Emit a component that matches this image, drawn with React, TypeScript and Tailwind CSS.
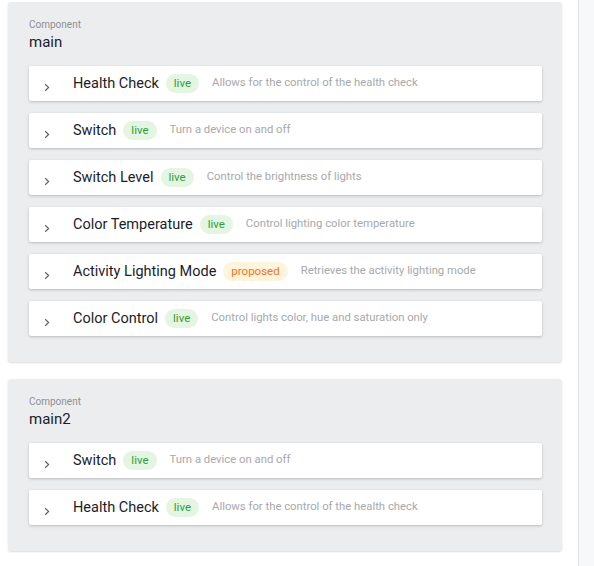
import React from "react";

type Capability = {
  name: string;
  status: "live" | "proposed";
  description: string;
};

const components: { id: string; capabilities: Capability[] }[] = [
  {
    id: "main",
    capabilities: [
      { name: "Health Check", status: "live", description: "Allows for the control of the health check" },
      { name: "Switch", status: "live", description: "Turn a device on and off" },
      { name: "Switch Level", status: "live", description: "Control the brightness of lights" },
      { name: "Color Temperature", status: "live", description: "Control lighting color temperature" },
      { name: "Activity Lighting Mode", status: "proposed", description: "Retrieves the activity lighting mode" },
      { name: "Color Control", status: "live", description: "Control lights color, hue and saturation only" },
    ],
  },
  {
    id: "main2",
    capabilities: [
      { name: "Switch", status: "live", description: "Turn a device on and off" },
      { name: "Health Check", status: "live", description: "Allows for the control of the health check" },
    ],
  },
];

function Chevron() {
  return (
    <svg width="6" height="9" viewBox="0 0 6 9" className="mt-[7px] shrink-0">
      <polyline points="1.2,1.2 4.6,4.5 1.2,7.8" fill="none" stroke="#5f6368" strokeWidth="1.2" />
    </svg>
  );
}

function Badge({ status }: { status: Capability["status"] }) {
  if (status === "proposed") {
    return (
      <span className="ml-[7px] inline-flex items-center h-[19px] px-[8px] rounded-full bg-[#fff4dc] text-[#f5711f] text-[11.5px]">
        proposed
      </span>
    );
  }
  return (
    <span className="ml-[7px] inline-flex items-center h-[19px] px-[8px] rounded-full bg-[#e4f5e2] text-[#2f9e38] text-[11.5px]">
      live
    </span>
  );
}

function CapabilityRow({ cap }: { cap: Capability }) {
  return (
    <div className="h-[35px] bg-white rounded-[2px] shadow-[0_1px_3px_rgba(0,0,0,0.22)] flex items-center pl-[15px]">
      <Chevron />
      <span className="ml-[23px] text-[14.5px] text-[#1b1c2a] whitespace-nowrap">{cap.name}</span>
      <Badge status={cap.status} />
      <span className="ml-[13px] text-[11.3px] text-[#a7a8ac] whitespace-nowrap">{cap.description}</span>
    </div>
  );
}

export default function App() {
  return (
    <div className="flex w-[594px] h-[566px] bg-white overflow-hidden" style={{ fontFamily: "Roboto, 'Noto Sans', sans-serif" }}>
      <div className="w-[578px] shrink-0 pl-[8px] pr-[16px] pt-[2px] flex flex-col gap-[17px]">
        {components.map((c) => (
          <section
            key={c.id}
            className="bg-[#ecedef] rounded-[3px] shadow-[0_1px_2px_rgba(0,0,0,0.14)] pl-[21px] pr-[20px] pt-[16px] pb-[26px]"
          >
            <div className="text-[10px] leading-[14px] text-[#8e9096]">Component</div>
            <div className="text-[15px] leading-[20px] text-[#1b1c2a]">{c.id}</div>
            <div className="mt-[14px] flex flex-col gap-[12px]">
              {c.capabilities.map((cap, i) => (
                <CapabilityRow key={i} cap={cap} />
              ))}
            </div>
          </section>
        ))}
      </div>
      <div className="flex-1 bg-[#f7f8fa] border-l border-[#e3e4e7]" />
    </div>
  );
}
